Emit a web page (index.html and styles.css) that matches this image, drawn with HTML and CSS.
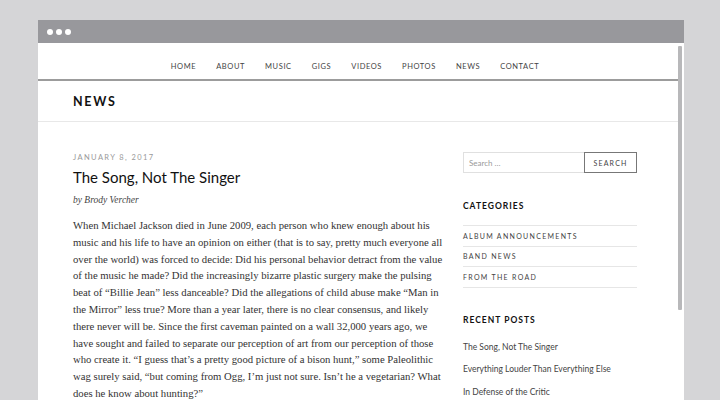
FILE: index.html
```html
<!DOCTYPE html>
<html>
<head>
<meta charset="utf-8">
<link rel="stylesheet" href="styles.css">
</head>
<body>
<div class="window">
  <div class="titlebar">
    <span class="dot"></span><span class="dot"></span><span class="dot"></span>
  </div>
  <div class="viewport">
    <div class="page">
      <nav class="nav">
        <a>HOME</a><a>ABOUT</a><a>MUSIC</a><a>GIGS</a><a>VIDEOS</a><a>PHOTOS</a><a>NEWS</a><a>CONTACT</a>
      </nav>
      <header class="pagehead"><h1>NEWS</h1></header>
      <div class="content">
        <main class="post">
          <div class="date">JANUARY 8, 2017</div>
          <h2 class="title">The Song, Not The Singer</h2>
          <div class="byline">by Brody Vercher</div>
          <p class="body">When Michael Jackson died in June 2009, each person who knew enough about his<br>
music and his life to have an opinion on either (that is to say, pretty much everyone all<br>
over the world) was forced to decide: Did his personal behavior detract from the value<br>
of the music he made? Did the increasingly bizarre plastic surgery make the pulsing<br>
beat of “Billie Jean” less danceable? Did the allegations of child abuse make “Man in<br>
the Mirror” less true? More than a year later, there is no clear consensus, and likely<br>
there never will be. Since the first caveman painted on a wall 32,000 years ago, we<br>
have sought and failed to separate our perception of art from our perception of those<br>
who create it. “I guess that’s a pretty good picture of a bison hunt,” some Paleolithic<br>
wag surely said, “but coming from Ogg, I’m just not sure. Isn’t he a vegetarian? What<br>
does he know about hunting?”</p>
        </main>
        <aside class="sidebar">
          <div class="search">
            <div class="search-input">Search …</div>
            <div class="search-btn">SEARCH</div>
          </div>
          <h3 class="widget-title">CATEGORIES</h3>
          <ul class="cats">
            <li>ALBUM ANNOUNCEMENTS</li>
            <li>BAND NEWS</li>
            <li>FROM THE ROAD</li>
          </ul>
          <h3 class="widget-title recent">RECENT POSTS</h3>
          <ul class="recent-list">
            <li>The Song, Not The Singer</li>
            <li>Everything Louder Than Everything Else</li>
            <li>In Defense of the Critic</li>
          </ul>
        </aside>
      </div>
    </div>
    <div class="scrollbar"><div class="thumb"></div></div>
  </div>
</div>
</body>
</html>
```

FILE: styles.css
```css
html, body {
  margin: 0;
  padding: 0;
  background: #d5d5d7;
  height: 400px;
  overflow: hidden;
}
.window {
  margin: 20px 0 0 38px;
  width: 646px;
  height: 380px;
  background: #fff;
  display: flex;
  flex-direction: column;
}
.titlebar {
  height: 23px;
  background: #98989c;
  display: flex;
  align-items: center;
  padding-left: 9px;
  gap: 3px;
}
.dot {
  width: 6px;
  height: 6px;
  border-radius: 50%;
  background: #fff;
}
.viewport {
  flex: 1;
  display: flex;
  overflow: hidden;
}
.page {
  width: 640px;
}
.scrollbar {
  width: 6px;
  background: #fff;
  padding-top: 3px;
}
.thumb {
  width: 4px;
  height: 264px;
  background: #b8b8ba;
  border-radius: 1px;
}
.nav {
  height: 36px;
  border-bottom: 2px solid #9c9c9c;
  display: flex;
  justify-content: center;
  align-items: flex-end;
  font-family: "Lato", sans-serif;
  font-size: 7.5px;
  letter-spacing: 0.6px;
  color: #444;
  padding-right: 6px;
}
.nav a {
  padding: 0 10px 8px;
}
.pagehead {
  height: 40px;
  border-bottom: 1px solid #e8e8e8;
  display: flex;
  align-items: center;
  padding-left: 35px;
}
.pagehead h1 {
  margin: 1px 0 0;
  font-family: "Lato", sans-serif;
  font-weight: 700;
  font-size: 12.5px;
  letter-spacing: 1.7px;
  color: #111;
}
.content {
  display: flex;
  padding: 30px 41px 0 35px;
  gap: 20px;
}
.post {
  width: 370px;
  flex: none;
}
.date {
  font-family: "Lato", sans-serif;
  font-size: 7.5px;
  letter-spacing: 1.4px;
  color: #999;
  line-height: 12px;
}
.title {
  margin: 2px 0 0;
  font-family: "Lato", sans-serif;
  font-weight: 400;
  font-size: 15px;
  color: #111;
  line-height: 22px;
}
.byline {
  margin-top: 5px;
  font-family: "Liberation Serif", serif;
  font-style: italic;
  font-size: 9.5px;
  color: #444;
  line-height: 14px;
}
.body {
  margin: 10px 0 0;
  font-family: "Liberation Serif", serif;
  font-size: 10.7px;
  line-height: 16.8px;
  color: #333;
  white-space: nowrap;
}
.sidebar {
  width: 175px;
  padding-top: 0;
}
.search {
  display: flex;
  height: 21px;
}
.search-input {
  flex: 1;
  border: 1px solid #e0e0e0;
  border-right: none;
  font-family: "Lato", sans-serif;
  font-size: 8px;
  color: #999;
  display: flex;
  align-items: center;
  padding-left: 5px;
}
.search-btn {
  width: 51px;
  border: 1px solid #777;
  font-family: "Lato", sans-serif;
  font-size: 7px;
  letter-spacing: 1.2px;
  color: #444;
  display: flex;
  align-items: center;
  justify-content: center;
}
.widget-title {
  margin: 27px 0 0;
  font-family: "Lato", sans-serif;
  font-weight: 700;
  font-size: 8.5px;
  letter-spacing: 1px;
  color: #111;
  line-height: 12px;
}
.cats {
  list-style: none;
  margin: 13px 0 0;
  padding: 0;
  border-top: 1px solid #e6e6e6;
}
.cats li {
  height: 19.5px;
  border-bottom: 1px solid #e6e6e6;
  font-family: "Lato", sans-serif;
  font-size: 7px;
  letter-spacing: 1.3px;
  color: #444;
  display: flex;
  align-items: center;
}
.widget-title.recent {
  margin-top: 26px;
}
.recent-list {
  list-style: none;
  margin: 10px 0 0;
  padding: 0;
}
.recent-list li {
  font-family: "Lato", sans-serif;
  font-size: 8.5px;
  color: #444;
  line-height: 22.5px;
}
```
